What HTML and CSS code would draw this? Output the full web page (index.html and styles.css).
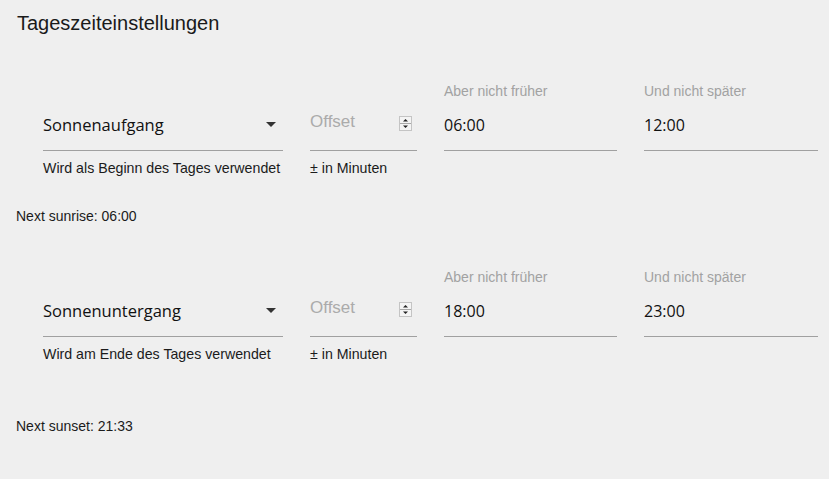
FILE: index.html
```html
<!DOCTYPE html>
<html lang="de">
<head>
<meta charset="utf-8">
<title>Tageszeiteinstellungen</title>
<link rel="stylesheet" href="styles.css">
</head>
<body>
<div class="page">
  <h1 class="title">Tageszeiteinstellungen</h1>

  <div class="row row-first">
    <div class="field field-select">
      <div class="label"></div>
      <div class="control">
        <span class="value value-select">Sonnenaufgang</span>
        <svg class="arrow" width="10" height="5" viewBox="0 0 10 5"><path d="M0 0H10L5 5Z" fill="#333"/></svg>
      </div>
      <div class="helper">Wird als Beginn des Tages verwendet</div>
    </div>
    <div class="field field-offset">
      <div class="label"></div>
      <div class="control control-offset">
        <span class="placeholder">Offset</span>
        <svg class="spin" width="13" height="15" viewBox="0 0 13 15"><rect x="0.5" y="0.5" width="12" height="14" fill="#f4f4f4" stroke="#c4c4c4"/><line x1="1" y1="7.5" x2="12" y2="7.5" stroke="#a8a8a8"/><path d="M4 5.5H9L6.5 3Z" fill="#222"/><path d="M4 9.5H9L6.5 12Z" fill="#222"/></svg>
      </div>
      <div class="helper">± in Minuten</div>
    </div>
    <div class="field field-time">
      <div class="label">Aber nicht früher</div>
      <div class="control"><span class="value">06:00</span></div>
      <div class="helper"></div>
    </div>
    <div class="field field-time2">
      <div class="label">Und nicht später</div>
      <div class="control"><span class="value">12:00</span></div>
      <div class="helper"></div>
    </div>
  </div>
  <p class="next next-sunrise">Next sunrise: 06:00</p>

  <div class="row row-second">
    <div class="field field-select">
      <div class="label"></div>
      <div class="control">
        <span class="value value-select">Sonnenuntergang</span>
        <svg class="arrow" width="10" height="5" viewBox="0 0 10 5"><path d="M0 0H10L5 5Z" fill="#333"/></svg>
      </div>
      <div class="helper">Wird am Ende des Tages verwendet</div>
    </div>
    <div class="field field-offset">
      <div class="label"></div>
      <div class="control control-offset">
        <span class="placeholder">Offset</span>
        <svg class="spin" width="13" height="15" viewBox="0 0 13 15"><rect x="0.5" y="0.5" width="12" height="14" fill="#f4f4f4" stroke="#c4c4c4"/><line x1="1" y1="7.5" x2="12" y2="7.5" stroke="#a8a8a8"/><path d="M4 5.5H9L6.5 3Z" fill="#222"/><path d="M4 9.5H9L6.5 12Z" fill="#222"/></svg>
      </div>
      <div class="helper">± in Minuten</div>
    </div>
    <div class="field field-time">
      <div class="label">Aber nicht früher</div>
      <div class="control"><span class="value">18:00</span></div>
      <div class="helper"></div>
    </div>
    <div class="field field-time2">
      <div class="label">Und nicht später</div>
      <div class="control"><span class="value">23:00</span></div>
      <div class="helper"></div>
    </div>
  </div>
  <p class="next next-sunset">Next sunset: 21:33</p>
</div>
</body>
</html>
```

FILE: styles.css
```css
html, body {
  margin: 0;
  padding: 0;
  background: #efefef;
}
body {
  font-family: "Liberation Sans", Arial, sans-serif;
  color: #1b1b1b;
}
.page {
  padding: 0 0 0 16px;
}
.title {
  margin: 0;
  padding-top: 11px;
  padding-left: 1px;
  font-size: 20px;
  line-height: 24px;
  font-weight: normal;
  color: #1a1a1a;
}
.row {
  display: flex;
  gap: 27px;
  padding-left: 27px;
}
.row-first {
  margin-top: 48px;
}
.row-second {
  margin-top: 45px;
}
.field {
  display: flex;
  flex-direction: column;
}
.field-select { width: 240px; }
.field-offset { width: 107px; }
.field-time { width: 173px; }
.field-time2 { width: 174px; }
.label {
  height: 16px;
  font-size: 14px;
  line-height: 16px;
  color: #a2a2a2;
  white-space: nowrap;
}
.control {
  display: flex;
  align-items: flex-start;
  height: 52px;
  box-sizing: border-box;
  padding-top: 16px;
  border-bottom: 1px solid #a0a0a0;
}
.value {
  font-family: "Segoe UI", "Open Sans", sans-serif;
  font-size: 16px;
  line-height: 20px;
  color: #111;
  white-space: nowrap;
}
.value-select {
  font-size: 16.5px;
}
.arrow {
  margin-left: auto;
  margin-right: 7px;
  margin-top: 7px;
}
.control-offset {
  padding-top: 13px;
}
.placeholder {
  font-size: 17px;
  line-height: 20px;
  color: #ababab;
}
.spin {
  margin-left: auto;
  margin-right: 5px;
  margin-top: 4px;
}
.helper {
  margin-top: 9px;
  height: 16px;
  font-size: 14.2px;
  line-height: 16px;
  color: #1b1b1b;
  white-space: nowrap;
}
.next {
  margin: 0;
  font-size: 14px;
  line-height: 16px;
  color: #1b1b1b;
}
.next-sunrise {
  margin-top: 32px;
}
.next-sunset {
  margin-top: 56px;
}
```
